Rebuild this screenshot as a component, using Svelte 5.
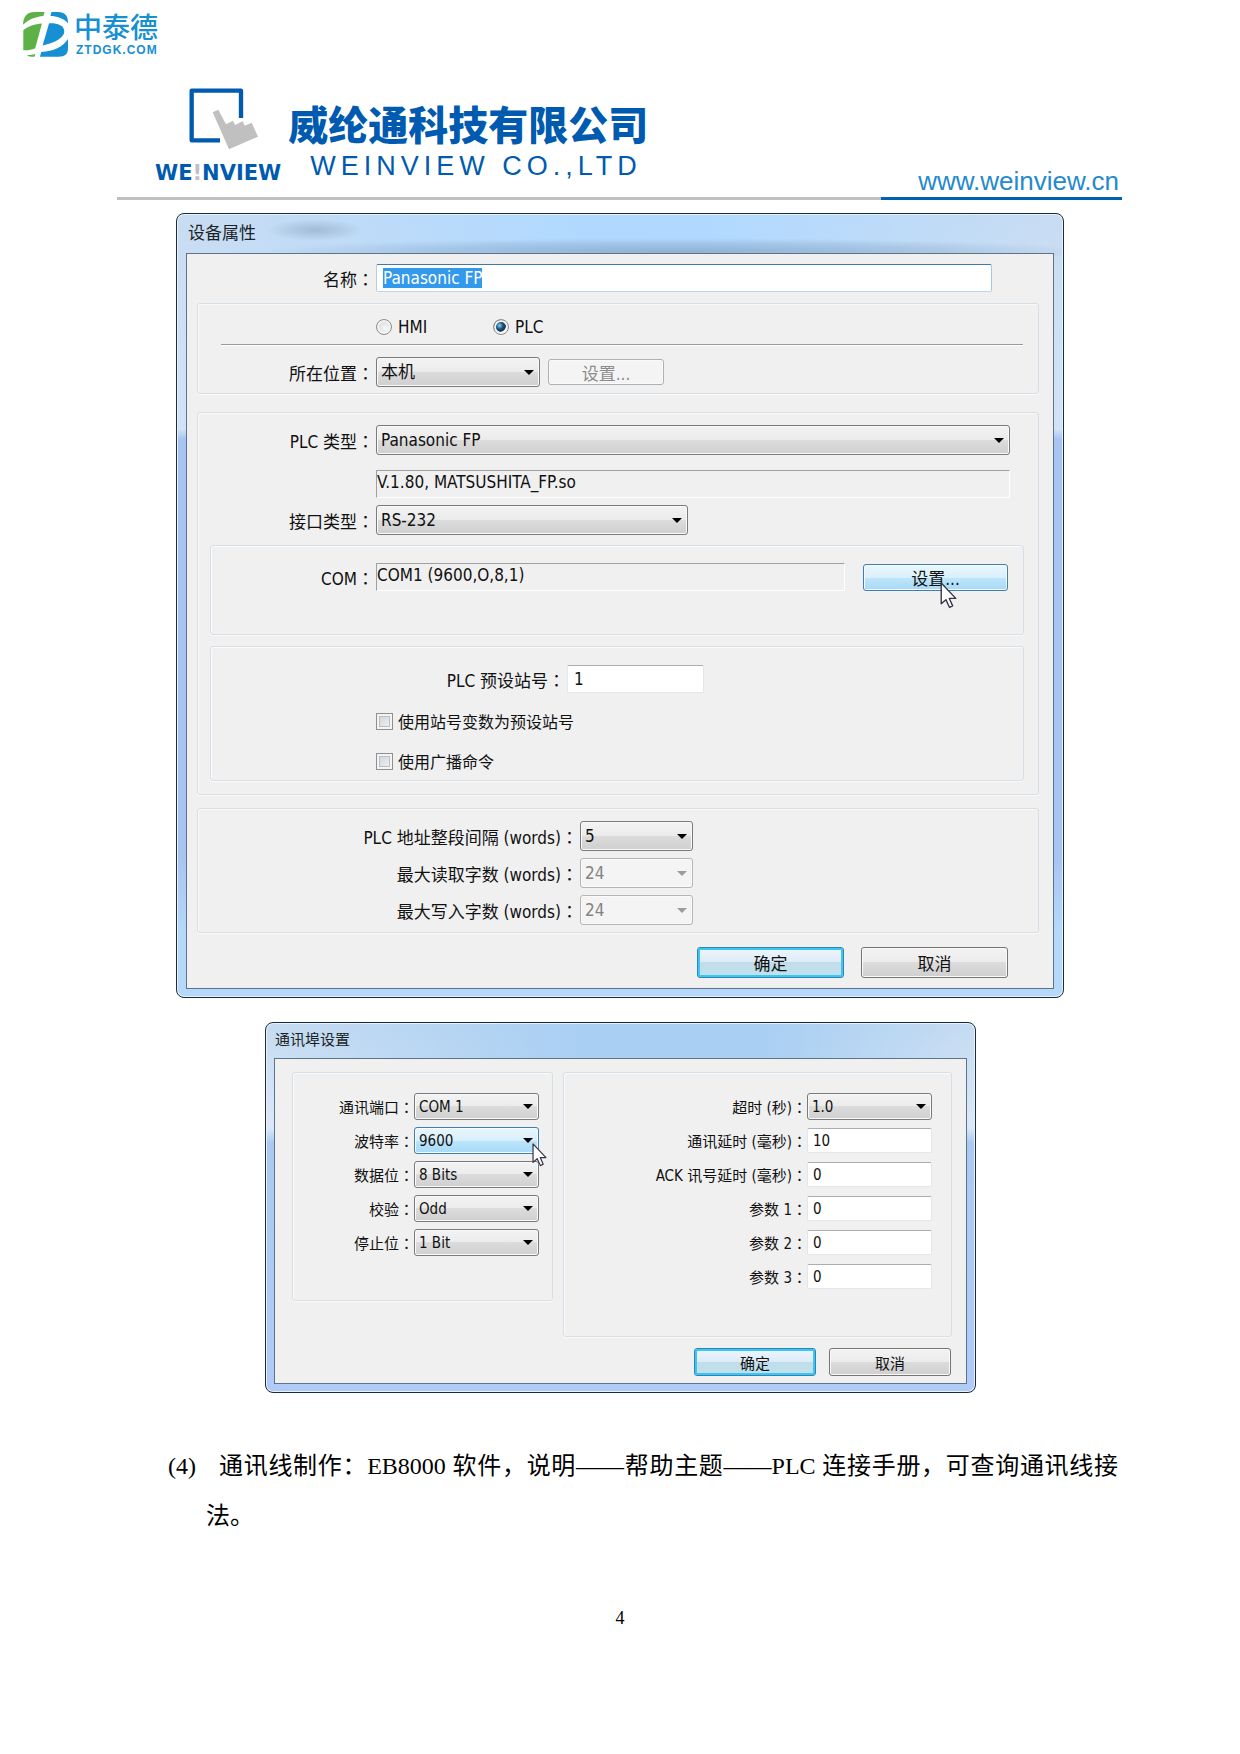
<script>
  import { onMount } from 'svelte';

  let nameInput;
  let name = $state('Panasonic FP');
  let target = $state('plc');

  const wordRows = [
    { id: 'gap', label: 'PLC 地址整段间隔 (words)', value: '5', disabled: false },
    { id: 'read', label: '最大读取字数 (words)', value: '24', disabled: true },
    { id: 'write', label: '最大写入字数 (words)', value: '24', disabled: true }
  ];

  const portRows = [
    { id: 'port', label: '通讯端口', value: 'COM 1' },
    { id: 'baud', label: '波特率', value: '9600', hot: true },
    { id: 'bits', label: '数据位', value: '8 Bits' },
    { id: 'parity', label: '校验', value: 'Odd' },
    { id: 'stop', label: '停止位', value: '1 Bit' }
  ];

  const paramRows = [
    { id: 'delay', label: '通讯延时 (毫秒)', value: '10' },
    { id: 'ack', label: 'ACK 讯号延时 (毫秒)', value: '0' },
    { id: 'p1', label: '参数 1', value: '0' },
    { id: 'p2', label: '参数 2', value: '0' },
    { id: 'p3', label: '参数 3', value: '0' }
  ];

  onMount(() => {
    nameInput.focus({ preventScroll: true });
    nameInput.select();
  });
</script>

{#snippet pointer()}
  <svg class="pointer" viewBox="0 0 16 26" aria-hidden="true">
    <path d="M1 1V21L5.500 17L9 24.500L12 23L8.800 15.800H15Z" fill="#fff" stroke="#33334a" stroke-width="1.300" stroke-linejoin="round" />
  </svg>
{/snippet}

{#snippet colon()}<span class="colon">：</span>{/snippet}

<div class="site">
  <svg class="site-mark" viewBox="0 0 133 133" aria-hidden="true">
    <g fill="#5cb147">
      <path d="M0 38C1 12 12 0 35 0H64L60 12C38 14 16 22 0 38Z" />
      <path d="M1 54C15 42 35 36 56 34L36 107C25 112 12 114 1 113Z" />
      <path d="M12 127C22 127 30 126 37 124L34 132H25C20 132 14 130 12 127Z" />
    </g>
    <g fill="#168fd3">
      <path d="M84 0H105C122 0 133 10 133 30V33C118 18 100 12 81 12Z" />
      <path d="M77 33C100 32 122 38 122 58C122 75 95 92 58 99Z" />
      <path d="M133 80V107C133 124 124 132 105 132H50L54 118C90 116 118 104 133 80Z" />
    </g>
  </svg>
  <div class="site-name">
    <span class="site-cn">中泰德</span>
    <span class="site-url">ZTDGK.COM</span>
  </div>
</div>

<main>
  <header>
    <div class="brand">
      <svg class="brand-mark" viewBox="0 0 210 186" aria-hidden="true">
        <path d="M93 157H8V8H156V90" fill="none" stroke="#005bb0" stroke-width="13" stroke-linejoin="round" />
        <path d="M71 73L88 65L111 109L132 98L138 111L161 100L167 113L188 104L207 146L120 184Z" fill="#c0c0c0" />
      </svg>
      <span class="brand-word">WE<i>!</i>NVIEW</span>
    </div>
    <div class="company">
      <h1>威纶通科技有限公司</h1>
      <p>WEINVIEW CO.,LTD</p>
    </div>
    <a class="web" href="http://www.weinview.cn">www.weinview.cn</a>
  </header>
  <div class="rule"><span></span></div>

  <section class="dialog device" aria-labelledby="device-title">
    <h2 id="device-title">设备属性</h2>
    <form class="client">
      <div class="row name">
        <label for="name">名称{@render colon()}</label>
        <input id="name" class="text focus" bind:this={nameInput} bind:value={name} />
      </div>

      <div class="group place">
        <div class="radios">
          <label><input type="radio" value="hmi" bind:group={target} />HMI</label>
          <label><input type="radio" value="plc" bind:group={target} />PLC</label>
        </div>
        <hr />
        <div class="row">
          <label for="where">所在位置{@render colon()}</label>
          <span class="pick where"><select id="where"><option>本机</option></select></span>
          <button type="button" class="btn set-off" disabled>设置...</button>
        </div>
      </div>

      <div class="group plc">
        <div class="row wide">
          <label for="plctype">PLC 类型{@render colon()}</label>
          <span class="pick grow"><select id="plctype"><option>Panasonic FP</option></select></span>
        </div>
        <div class="row wide driver">
          <span class="lbl"></span>
          <output class="sunken grow">V.1.80, MATSUSHITA_FP.so</output>
        </div>
        <div class="row iface">
          <label for="iface">接口类型{@render colon()}</label>
          <span class="pick iface-pick"><select id="iface"><option>RS-232</option></select></span>
        </div>

        <div class="group inner com">
          <div class="row">
            <span class="lbl">COM{@render colon()}</span>
            <output class="sunken grow">COM1 (9600,O,8,1)</output>
            <span class="hover-target">
              <button type="button" class="btn hot set-on">设置...</button>
              {@render pointer()}
            </span>
          </div>
        </div>

        <div class="group inner station">
          <div class="row num">
            <label for="station">PLC 预设站号{@render colon()}</label>
            <input id="station" class="text short" value="1" />
          </div>
          <label class="check"><input type="checkbox" />使用站号变数为预设站号</label>
          <label class="check"><input type="checkbox" />使用广播命令</label>
        </div>
      </div>

      <div class="group words">
        {#each wordRows as r (r.id)}
          <div class="row">
            <label for={r.id}>{r.label}{@render colon()}</label>
            <span class="pick words-pick" class:off={r.disabled}>
              <select id={r.id} disabled={r.disabled}><option>{r.value}</option></select>
            </span>
          </div>
        {/each}
      </div>

      <div class="actions">
        <button type="button" class="btn default">确定</button>
        <button type="button" class="btn">取消</button>
      </div>
    </form>
  </section>

  <section class="dialog port" aria-labelledby="port-title">
    <h2 id="port-title">通讯埠设置</h2>
    <form class="client">
      <div class="columns">
        <div class="group fields left">
          {#each portRows as r (r.id)}
            <div class="row">
              <label for={r.id}>{r.label}{@render colon()}</label>
              <span class="pick" class:hot={r.hot}>
                <select id={r.id}><option>{r.value}</option></select>
                {#if r.hot}{@render pointer()}{/if}
              </span>
            </div>
          {/each}
        </div>
        <div class="group fields right">
          <div class="row">
            <label for="timeout">超时 (秒){@render colon()}</label>
            <span class="pick"><select id="timeout"><option>1.0</option></select></span>
          </div>
          {#each paramRows as r (r.id)}
            <div class="row">
              <label for={r.id}>{r.label}{@render colon()}</label>
              <input id={r.id} class="text" value={r.value} />
            </div>
          {/each}
        </div>
      </div>
      <div class="actions">
        <button type="button" class="btn default">确定</button>
        <button type="button" class="btn">取消</button>
      </div>
    </form>
  </section>

  <div class="step">
    <span class="step-no">(4)</span>
    <p>通讯线制作：EB8000 软件，说明——帮助主题——PLC 连接手册，可查询通讯线接法。</p>
  </div>
</main>
<footer>4</footer>

<style>
  :global(body) {
    margin: 0;
    background: #fff;
  }
  :global(*) {
    box-sizing: border-box;
  }
  h1, h2, p, hr {
    margin: 0;
    font-weight: normal;
  }

  .site {
    display: flex;
    align-items: center;
    gap: 6px;
    height: 57px;
    padding: 12px 23px 0;
    color: #168fd3;
    font-family: "Liberation Sans", "Noto Sans CJK SC", sans-serif;
  }
  .site-mark {
    width: 45px;
    height: 45px;
  }
  .site-name {
    display: flex;
    flex-direction: column;
    gap: 5px;
  }
  .site-cn {
    font-family: "Noto Sans CJK SC", sans-serif;
    font-size: 28px;
    font-weight: 500;
    line-height: 26px;
  }
  .site-url {
    padding-left: 2px;
    font-size: 12px;
    font-weight: 700;
    line-height: 12px;
    letter-spacing: 1px;
  }

  main {
    padding: 0 118px 0 117px;
  }
  header {
    display: flex;
    align-items: flex-end;
    padding: 31px 3px 0 38px;
    color: #005bb0;
    font-family: "Liberation Sans", "Noto Sans CJK SC", sans-serif;
  }
  .brand {
    display: flex;
    flex-direction: column;
    align-items: center;
    padding-bottom: 12px;
  }
  .brand-mark {
    width: 70px;
    height: 62px;
    margin: 0 0 11px 12px;
  }
  .brand-word {
    font: 700 21px/24px "DejaVu Sans", sans-serif;
  }
  .brand-word i {
    color: #c0c0c0;
    font-style: normal;
  }
  .company {
    flex: 1;
    padding: 0 0 16px 7px;
    white-space: nowrap;
  }
  h1 {
    font-family: "Noto Sans CJK SC", sans-serif;
    font-size: 40px;
    font-weight: 900;
    line-height: 48px;
  }
  .company p {
    padding: 4px 0 0 22px;
    font-size: 27px;
    line-height: 30px;
    letter-spacing: 5px;
  }
  .web {
    padding-bottom: 1px;
    color: #2589cc;
    font-size: 26px;
    line-height: 30px;
    text-decoration: none;
  }
  .rule {
    display: flex;
    justify-content: flex-end;
    height: 3px;
    background: #c0c0c0;
  }
  .rule span {
    width: 24%;
    background: #0060b2;
  }

  .dialog {
    border: 1px solid #1d2c3c;
    border-radius: 8px;
    box-shadow: inset 0 0 0 1px #e6f2fd;
    color: #111;
    font-family: "DejaVu Sans Condensed", "Noto Sans", "Noto Sans CJK SC", sans-serif;
  }
  .device {
    margin: 13px 58px 0 59px;
    padding: 0 9px 8px;
    background:
      radial-gradient(ellipse 48px 11px at 138px 16px, #8fa5bd99, #8fa5bd00),
      radial-gradient(ellipse 420px 14px at 500px 38px, #7f9dbdaa, #7f9dbd55 60%, #7f9dbd00),
      linear-gradient(90deg, #c9dcf000, #b1d9ff 45%, #b1d9ff 60%, #d0e2f800) 0 0 / 100% 40px no-repeat,
      linear-gradient(#c8dcf2, #d2e3f8 215px, #a7c4f2 225px, #a7c4f2 640px, #b6d9fb 720px);
    font-size: 17px;
  }
  .port {
    margin: 24px 146px 0 148px;
    padding: 0 8px 8px;
    background:
      linear-gradient(90deg, #d5e5f500, #a9cff3 45%, #a9cff3 70%, #d0e2f800) 0 0 / 100% 36px no-repeat,
      linear-gradient(#c5dbf1, #dbe8f8 105px, #abc9f0 120px, #b0cbf8);
    font-size: 15px;
  }
  h2 {
    font-size: inherit;
    color: #1b1f26;
  }
  .device h2 {
    padding: 0 2px;
    line-height: 39px;
  }
  .port h2 {
    padding: 0 1px;
    line-height: 35px;
  }
  .client {
    border: 1px solid #5d7488;
    background: #f0f0f0;
  }
  .device .client {
    padding: 10px 0;
  }
  .port .client {
    padding: 13px 0 7px;
  }

  .group {
    border: 1px solid #d6dfe5;
    border-radius: 3px;
    box-shadow: inset 1px 1px #fafafa, 0 1px #fafafa;
  }
  .device .group {
    margin: 0 14px 0 10px;
  }
  .row {
    display: flex;
    align-items: center;
  }
  .row label,
  .lbl {
    flex: none;
    width: 178px;
    padding-right: 2px;
    text-align: right;
    white-space: nowrap;
  }
  /* The TC face centres the full-width colon in its cell. */
  .colon {
    font-family: "Noto Sans CJK TC", sans-serif;
  }
  .name label {
    width: 189px;
  }
  .name {
    padding-right: 61px;
  }
  .name input {
    flex: 1;
  }
  .grow {
    flex: 1;
  }

  input, select, button {
    font: inherit;
    color: inherit;
    margin: 0;
  }
  .text {
    min-width: 0;
    height: 28px;
    padding: 0 6px;
    border: 1px solid #e3e6ea;
    border-top-color: #abadb3;
    border-radius: 2px;
    outline: none;
    background: #fff;
    line-height: 20px;
  }
  .text.focus {
    border-color: #3d7bad #a5c9e3 #b7d9ed #b5cfe7;
  }
  .text::selection {
    background: #3399ea;
    color: #fff;
  }

  .pick {
    position: relative;
    display: grid;
    align-items: center;
  }
  .pick select {
    grid-area: 1 / 1;
    width: 100%;
    height: 30px;
    padding: 0 4px;
    appearance: none;
    border: 1px solid #7a7a7a;
    border-radius: 3px;
    outline: none;
    background: linear-gradient(#f3f3f3, #ebebeb 50%, #dcdcdc 50%, #cfcfcf);
    box-shadow: inset 0 0 0 1px #fafafa;
  }
  .pick::after {
    content: "";
    grid-area: 1 / 1;
    justify-self: end;
    margin-right: 6px;
    border: 5px solid transparent;
    border-top-color: #000;
    border-bottom: 0;
    pointer-events: none;
  }
  .pick.off select {
    border-color: #b5b5b5;
    background: #f4f4f4;
    color: #838383;
    opacity: 1;
  }
  .pick.off::after {
    border-top-color: #9c9c9c;
  }
  .pick.hot select {
    border-color: #3c7fb1;
    background: linear-gradient(#e8f6fd, #d8effc 50%, #bce5fc 50%, #a8daf6);
  }

  .btn {
    padding: 0;
    border: 1px solid #757575;
    border-radius: 3px;
    background: linear-gradient(#f3f3f3, #ebebeb 50%, #dcdcdc 50%, #cfcfcf);
    box-shadow: inset 0 0 0 1px #fafafa;
  }
  .btn.hot {
    border-color: #3c7fb1;
    background: linear-gradient(#eaf6fd, #d9f0fc 50%, #bee6fd 50%, #a7d9f5);
  }
  .btn.default {
    border-color: #2f83b5;
    background: linear-gradient(#eef6fc, #dcebf8 50%, #c2dcea 50%, #bfe2ec);
    box-shadow: inset 0 0 0 2px #3cc6f3;
  }
  .btn:disabled {
    border-color: #adb2b5;
    background: #f4f4f4;
    color: #8c8c8c;
  }
  .sunken {
    height: 28px;
    border: 1px solid #fff;
    border-top-color: #a0a0a0;
    border-left-color: #a0a0a0;
    line-height: 22px;
  }

  .device .place {
    margin-top: 11px;
    padding: 12px 0 6px;
  }
  .radios {
    display: flex;
    height: 22px;
    padding-left: 178px;
  }
  .radios label {
    display: flex;
    align-items: center;
    gap: 6px;
    width: 117px;
  }
  .radios input {
    appearance: none;
    width: 16px;
    height: 16px;
    border: 1px solid #8e8f8f;
    border-radius: 50%;
    background: radial-gradient(circle at 60% 60%, #f8f8f8, #c9cdd0);
    box-shadow: inset 0 0 0 2px #f4f4f4;
  }
  .radios input:checked {
    background: radial-gradient(circle at 40% 40%, #8fd0ee, #17507c 30%, #12324f 50%, #e9eef2 56%);
  }
  hr {
    height: 1px;
    margin: 6px 15px 12px 23px;
    border: 0;
    background: #9a9a9a;
    box-shadow: 0 1px #fff;
  }
  .where {
    width: 164px;
  }
  .set-off {
    width: 116px;
    height: 26px;
    margin-left: 8px;
  }

  .device .plc {
    margin-top: 18px;
    padding: 12px 0 13px;
  }
  .wide {
    padding-right: 28px;
  }
  .driver {
    margin: 15px 0 7px;
  }
  .iface-pick {
    width: 312px;
  }
  .device .inner {
    margin: 10px 14px 0 12px;
  }
  .inner .row label,
  .inner .lbl {
    width: 165px;
  }
  .com {
    padding: 17px 15px 43px 0;
  }
  .hover-target {
    position: relative;
    display: flex;
    margin-left: 18px;
  }
  .set-on {
    width: 145px;
    height: 27px;
  }
  .pointer {
    position: absolute;
    pointer-events: none;
  }
  .hover-target .pointer {
    left: 77px;
    top: 18px;
    width: 17px;
    height: 27px;
  }
  .pick .pointer {
    left: 118px;
    top: 16px;
    width: 15px;
    height: 24px;
    z-index: 1;
  }
  .device .station {
    margin-top: 11px;
    padding: 18px 0 7px;
  }
  .station .num label {
    width: 356px;
  }
  .short {
    width: 137px;
  }
  .check {
    display: flex;
    align-items: center;
    gap: 5px;
    height: 24px;
    margin: 16px 0 0 165px;
    font-size: 16px;
  }
  .check input {
    appearance: none;
    width: 17px;
    height: 17px;
    border: 1px solid #8e8f8f;
    background: linear-gradient(135deg, #cbcfd5, #f6f6f6);
    box-shadow: inset 0 0 0 2px #f4f4f4, inset 0 0 0 3px #b9bec4;
  }
  .device .words {
    display: grid;
    gap: 7px;
    margin-top: 13px;
    padding: 12px 0 7px;
  }
  .words .row label {
    width: 382px;
  }
  .words-pick {
    width: 113px;
  }
  .actions {
    display: flex;
    justify-content: flex-end;
  }
  .device .actions {
    gap: 17px;
    padding: 14px 45px 0 0;
  }
  .device .actions .btn {
    width: 147px;
    height: 31px;
  }

  .columns {
    display: flex;
    align-items: flex-start;
    gap: 10px;
    padding: 0 14px 0 17px;
  }
  .fields {
    display: grid;
    gap: 7px;
  }
  .fields .row {
    height: 27px;
  }
  .left {
    width: 261px;
    padding: 20px 13px 44px 0;
  }
  .right {
    flex: 1;
    padding: 20px 19px 46px 0;
  }
  .fields .row label {
    flex: 1;
    width: auto;
    padding-right: 0;
  }
  .fields .pick,
  .fields .text {
    width: 125px;
  }
  .fields .pick select {
    height: 27px;
  }
  .fields .text {
    height: 25px;
    padding: 0 5px;
  }
  .port .actions {
    gap: 13px;
    padding: 11px 15px 0 0;
  }
  .port .actions .btn {
    width: 122px;
    height: 28px;
  }

  .step {
    display: flex;
    margin: 48px 4px 0 51px;
    color: #000;
    font: 24px/50px "Liberation Serif", "Noto Sans CJK SC", serif;
  }
  .step-no {
    flex: none;
    width: 38px;
  }
  .step p {
    flex: 1;
    text-indent: 13px;
    text-align: justify;
  }
  footer {
    padding: 65px 0 40px;
    font: 18px/24px "Liberation Serif", serif;
    text-align: center;
  }
</style>
